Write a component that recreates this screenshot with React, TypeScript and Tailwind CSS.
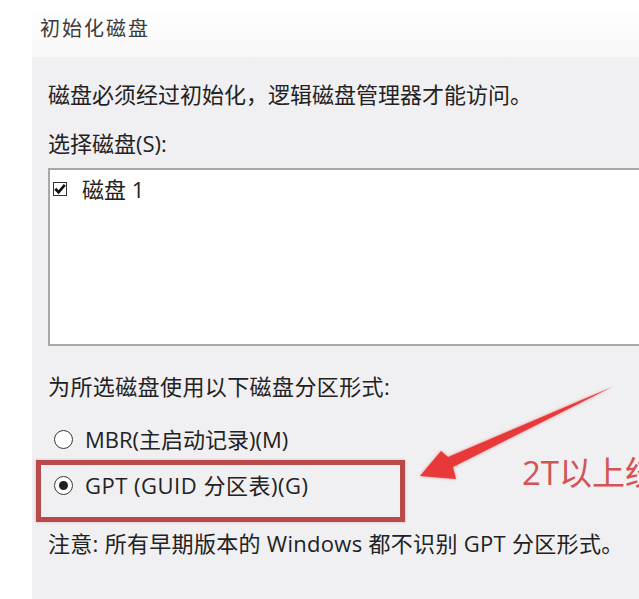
import React from "react";

const font = "font-['Open_Sans','Noto_Sans_CJK_SC',sans-serif]";

const Radio = ({ checked }: { checked?: boolean }) => (
  <span className="w-[19px] h-[19px] rounded-full border-[1.5px] border-[#3a3a3a] bg-white flex items-center justify-center shrink-0">
    {checked && <span className="w-[9px] h-[9px] rounded-full bg-[#222]" />}
  </span>
);

const Checkbox = () => (
  <span className="w-[14px] h-[14px] border border-[#333] bg-white flex items-center justify-center shrink-0">
    <svg width="12" height="12" viewBox="0 0 11 11">
      <path d="M1.2 5.3 L4.2 8.5 L9.9 1.8" fill="none" stroke="#111" strokeWidth="2.5" />
    </svg>
  </span>
);

export default function App() {
  return (
    <div className={`relative w-[639px] h-[599px] overflow-hidden bg-white pl-[32px] pt-[10px] ${font}`}>
      <div className="flex flex-col h-full">
        <div className="h-[47px] bg-gradient-to-b from-[#fefefe] to-[#f8f8f9] pl-[8px] pt-[8px] text-[20px] leading-[22px] tracking-[2px] text-[#3a3a3a]">
          初始化磁盘
        </div>
        <div className="flex-1 bg-[#f0eff2] pl-[16px] text-[22px] leading-[22px] text-[#222]">
          <p className="mt-[26px] whitespace-nowrap">
            磁盘必须经过初始化，逻辑磁盘管理器才能访问。
          </p>
          <p className="mt-[27px]">选择磁盘(S):</p>
          <div className="mt-[14px] h-[178px] border-2 border-r-0 border-[#a8a8aa] bg-white pl-[3px] pt-[8px]">
            <div className="flex items-center gap-[15px] h-[22px]">
              <Checkbox />
              <span>磁盘 1</span>
            </div>
          </div>
          <p className="mt-[29px] whitespace-nowrap tracking-[0.4px]">为所选磁盘使用以下磁盘分区形式:</p>
          <div className="mt-[31px] flex items-center gap-[12px] pl-[6px] h-[22px]">
            <Radio />
            <span>MBR(主启动记录)(M)</span>
          </div>
          <div className="mt-[10px] -ml-[12px] w-[369px] h-[62px] border-[5px] border-[#b94a4b] pl-[13px] pt-[9px] shadow-[0_0_2px_rgba(200,80,80,0.5)]">
            <div className="flex items-center gap-[12px] h-[22px]">
              <Radio checked />
              <span className="tracking-[0.5px]">GPT (GUID 分区表)(G)</span>
            </div>
          </div>
          <p className="mt-[10px] whitespace-nowrap tracking-[0.3px]">
            注意: 所有早期版本的 Windows 都不识别 GPT 分区形式。
          </p>
        </div>
      </div>

      <svg
        className="absolute left-0 top-0 pointer-events-none drop-shadow-[0_0_1.5px_rgba(235,90,90,0.7)]"
        width="639"
        height="599"
        viewBox="0 0 639 599"
      >
        <polygon
          points="420,476 456,479 453,467 612,387 448,457 441,451"
          fill="#e8393a"
        />
      </svg>
      <span className="absolute left-[522px] top-[452px] whitespace-nowrap text-[33px] leading-[42px] text-[#d25454]">
        2T以上统
      </span>
    </div>
  );
}
